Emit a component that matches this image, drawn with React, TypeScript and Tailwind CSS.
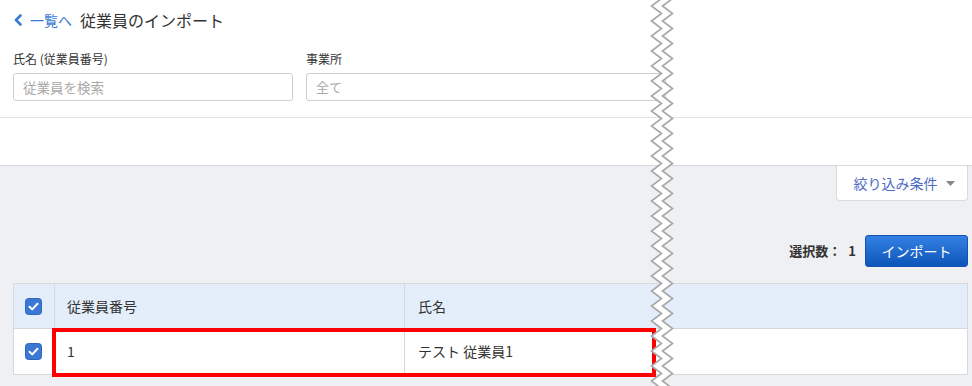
import React from "react";

function Check() {
  return (
    <svg width="17" height="17" viewBox="0 0 17 17">
      <rect x="0.5" y="0.5" width="16" height="16" rx="3" fill="#3a78d4" stroke="#2f67bd" />
      <path d="M4.5 8.8 L7.2 11.4 L12.5 5.8" fill="none" stroke="#fff" strokeWidth="2" strokeLinecap="round" strokeLinejoin="round" />
    </svg>
  );
}

function Zigzag() {
  const period = 15;
  const amp = 10;
  const off = 11;
  const base = 6.5;
  const left: [number, number][] = [];
  for (let y = -9, i = 0; y <= 400; y += period / 2, i++) {
    left.push([i % 2 === 0 ? base : base + amp, y]);
  }
  const right = left.map(([x, y]) => [x + off, y] as [number, number]);
  const poly = [...left, ...right.slice().reverse()].map((p) => p.join(",")).join(" ");
  const l = left.map((p) => p.join(",")).join(" ");
  const r = right.map((p) => p.join(",")).join(" ");
  return (
    <svg className="absolute left-[645px] top-0" width="35" height="386" viewBox="0 0 35 386">
      <polygon points={poly} fill="#fff" />
      <polyline points={l} fill="none" stroke="#a9a9a9" strokeWidth="1.7" />
      <polyline points={r} fill="none" stroke="#a9a9a9" strokeWidth="1.7" />
    </svg>
  );
}

export default function App() {
  return (
    <div className="relative w-[972px] h-[386px] overflow-hidden bg-[#eff0f4] font-['Noto_Sans_CJK_JP',sans-serif] text-[#333]">
      <div className="bg-white">
        <div className="px-[13px] pt-[8px] pb-[16px] border-b border-[#e3e3e3]">
          <div className="flex items-center h-[24px]">
            <svg width="9" height="12" viewBox="0 0 9 12" className="ml-[1px]">
              <path d="M6.5 1.5 L2 6 L6.5 10.5" fill="none" stroke="#3a7bd5" strokeWidth="2.6" strokeLinecap="round" strokeLinejoin="round" />
            </svg>
            <span className="ml-[7px] text-[14px] text-[#3a7bd5]">一覧へ</span>
            <span className="ml-[8px] text-[16px] text-[#333]">従業員のインポート</span>
          </div>
          <div className="mt-[19px] flex gap-[13px]">
            <div className="w-[280px]">
              <div className="text-[12px] leading-[16px] h-[16px]">氏名 (従業員番号)</div>
              <div className="mt-[6px] h-[28px] border border-[#cbcfd5] rounded-[3px] px-[9px] flex items-center text-[13.5px] text-[#a9a9a9]">
                従業員を検索
              </div>
            </div>
            <div className="w-[360px]">
              <div className="text-[12px] leading-[16px] h-[16px]">事業所</div>
              <div className="mt-[6px] h-[28px] border border-[#cbcfd5] rounded-[3px] px-[9px] flex items-center text-[13px] text-[#a9a9a9]">
                全て
              </div>
            </div>
          </div>
        </div>
        <div className="h-[48px] border-b border-[#d6d8dc]"></div>
      </div>

      <div className="flex justify-end pr-[4px]">
        <div className="w-[132px] h-[35px] bg-white border-x border-b border-[#d9dbdf] rounded-b-[4px] flex items-center justify-center gap-[8px] pl-[4px]">
          <span className="text-[14px] text-[#4d6bc4]">絞り込み条件</span>
          <svg width="9" height="5" viewBox="0 0 9 5">
            <path d="M0 0 L9 0 L4.5 5 Z" fill="#888" />
          </svg>
        </div>
      </div>

      <div className="mt-[34px] flex justify-end items-center pr-[4px]">
        <span className="text-[13px] font-bold text-[#333]">選択数：</span>
        <span className="text-[13px] font-bold text-[#333] ml-[7px] mr-[9px]">1</span>
        <div className="w-[103px] h-[32px] rounded-[3px] border border-[#1253b3] bg-gradient-to-b from-[#3481e3] to-[#0b54b9] flex items-center justify-center text-white text-[14px]">
          インポート
        </div>
      </div>

      <div className="mt-[16px] ml-[13px] mr-[4px] border border-[#d5d8dc] text-[14px]">
        <div className="flex h-[45px] bg-[#e4eefa] border-b border-[#d5d8dc]">
          <div className="w-[41px] border-r border-[#d5d8dc] flex items-center justify-center pr-[1px]">
            <Check />
          </div>
          <div className="w-[350px] border-r border-[#d5d8dc] flex items-center pl-[12px]">従業員番号</div>
          <div className="flex-1 flex items-center pl-[13px]">氏名</div>
        </div>
        <div className="flex h-[45px] bg-white">
          <div className="w-[41px] border-r border-[#d5d8dc] flex items-center justify-center pr-[1px]">
            <Check />
          </div>
          <div className="w-[350px] border-r border-[#d5d8dc] flex items-center pl-[12px]">1</div>
          <div className="flex-1 flex items-center pl-[13px]">テスト 従業員1</div>
        </div>
      </div>

      <div className="absolute left-[52px] top-[328px] w-[604px] h-[49px] border-4 border-[#ff0000]"></div>

      <Zigzag />
    </div>
  );
}
